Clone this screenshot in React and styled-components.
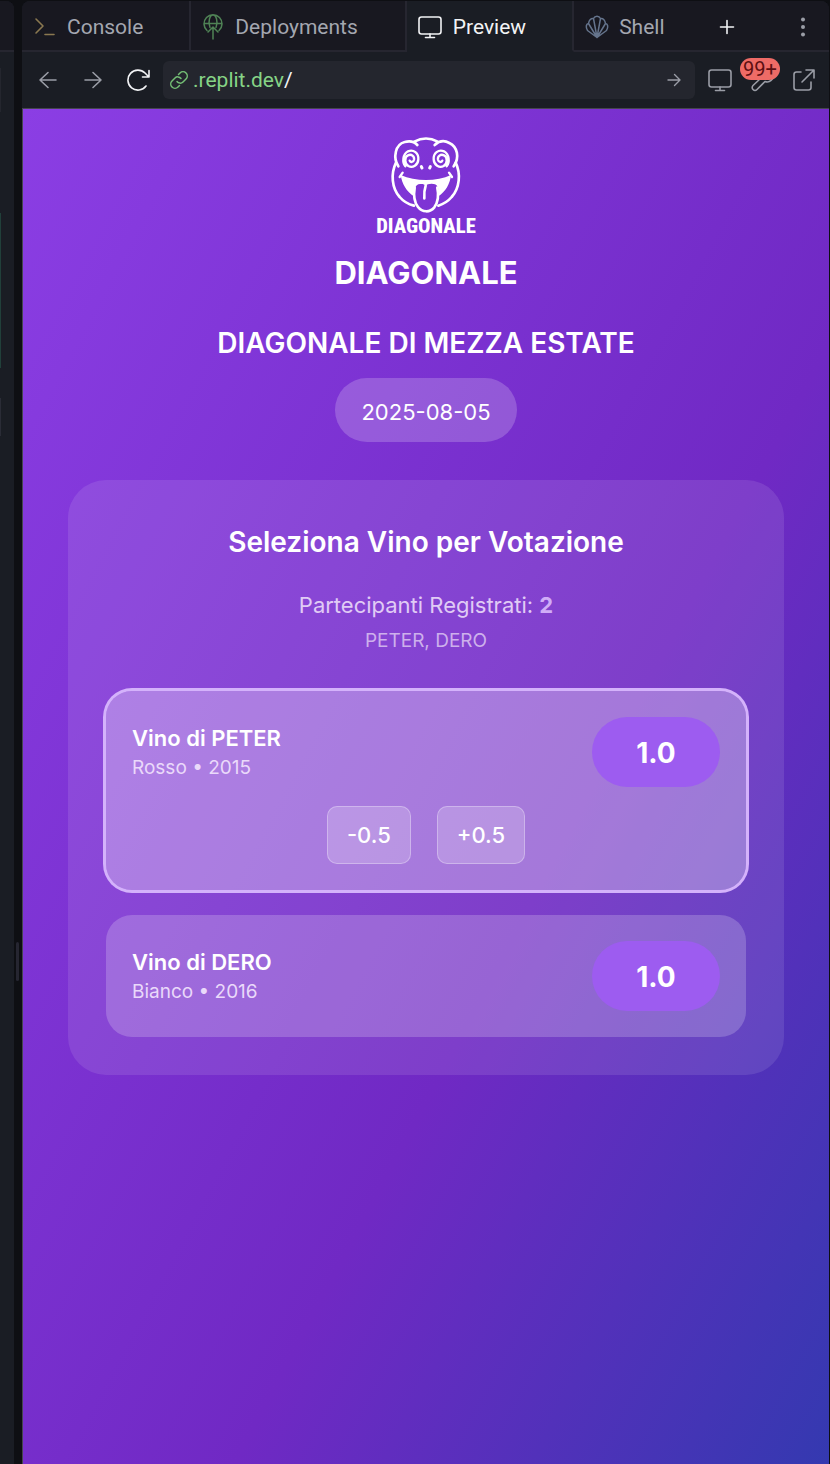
import React from "react";
import styled, { createGlobalStyle } from "styled-components";

const GlobalStyle = createGlobalStyle`
  *, *::before, *::after { box-sizing: border-box; }
  body { margin: 0; background: #0e0f13; }
  button, input { font: inherit; color: inherit; }
  h1, h2, h3, p { margin: 0; }
`;

const Workspace = styled.div`
  display: flex;
  min-height: 100vh;
  padding-top: 1px;
  background: #0e0f13;
  font-family: Roboto, "Liberation Sans", sans-serif;
`;

const SidePane = styled.aside`
  flex: 0 0 14px;
  background: #1a1d24;
  border-top-right-radius: 8px;
  overflow: hidden;
`;

const SideTab = styled.div`
  height: 51px;
  background: #181820;
  border-bottom: 2px solid #262630;
`;

const SideCard = styled.div`
  width: 1px;
  height: ${(p) => p.$height}px;
  margin-top: ${(p) => p.$gap}px;
  background: ${(p) => p.$color};
`;

const Divider = styled.div`
  flex: 0 0 8px;
  padding: 941px 3px 0 2px;
`;

const Grip = styled.div`
  height: 39px;
  border-radius: 2px;
  background: #262631;
`;

const Pane = styled.main`
  flex: 1;
  min-width: 0;
  display: flex;
  flex-direction: column;
  margin-right: 1px;
  border-radius: 8px 8px 0 0;
  overflow: hidden;
  background: #1a1d24;
`;

const TabBar = styled.nav`
  display: flex;
  height: 51px;
  background: #181820;
`;

const Tab = styled.button`
  display: flex;
  align-items: center;
  gap: 11px;
  padding: 2px ${(p) => p.$end}px 0 ${(p) => p.$start || 11}px;
  border: 0;
  border-right: 2px solid #262630;
  border-bottom: 2px solid ${(p) => (p.$active ? "#1a1d24" : "#262630")};
  background: ${(p) => (p.$active ? "#1a1d24" : "transparent")};
  color: ${(p) => (p.$active ? "#f2f3f5" : "#a4a7b0")};
  font-size: 21px;
  line-height: 28px;
  white-space: nowrap;
`;

const ShellTab = styled(Tab)`
  gap: 10px;
  border-right: 0;
`;

const TabTools = styled.div`
  flex: 1;
  display: flex;
  align-items: center;
  justify-content: space-between;
  padding: 2px 14px 0 10px;
  border-bottom: 2px solid #262630;
`;

const IconButton = styled.button`
  position: relative;
  display: flex;
  align-items: center;
  justify-content: center;
  flex: 0 0 auto;
  width: 24px;
  height: 24px;
  padding: 0;
  border: 0;
  background: none;
  color: ${(p) => (p.$bright ? "#f2f3f5" : "#9a9da6")};
`;

const Toolbar = styled.div`
  display: flex;
  align-items: center;
  height: 56px;
  padding: 0 13px 1px 14px;
`;

const NavButtons = styled.div`
  display: flex;
  gap: 21px;
  margin-right: 13px;
`;

const AddressBar = styled.form`
  flex: 1;
  min-width: 0;
  display: flex;
  align-items: center;
  height: 38px;
  padding: 0 9px 0 6px;
  border-radius: 6px;
  background: #24262e;
  font-size: 21px;
`;

const Host = styled.label`
  margin-left: 4px;
  color: #86d486;
`;

const PathInput = styled.input`
  flex: 1;
  min-width: 0;
  padding: 0;
  border: 0;
  outline: 0;
  background: none;
  color: #f2f3f5;
`;

const Actions = styled.div`
  display: flex;
  gap: 18px;
  margin-left: 13px;
`;

const Badge = styled.span`
  position: absolute;
  top: -10px;
  left: -10px;
  padding: 0 3px;
  border-radius: 11px;
  background: #ee6b66;
  color: #5e0f12;
  font-size: 20px;
  line-height: 22px;
`;

const Page = styled.section`
  flex: 1;
  padding: 27px 45px 48px;
  border-left: 1px solid #45454f;
  border-top: 1px solid #45454f;
  background: linear-gradient(118deg, #8b3ee4, #7029c4 61%, #3439b0);
  color: #fff;
  font-family: Inter, "Liberation Sans", sans-serif;
`;

const Header = styled.header`
  display: flex;
  flex-direction: column;
  align-items: center;
  text-align: center;
`;

const Brand = styled.h1`
  margin-top: 17px;
  font-size: 31px;
  line-height: 40px;
  font-weight: 700;
`;

const EventName = styled.h2`
  margin-top: 31px;
  font-size: 28px;
  line-height: 38px;
  font-weight: 600;
`;

const DatePill = styled.time`
  height: 64px;
  margin-top: 16px;
  padding: 2px 26px 0;
  border-radius: 32px;
  background: rgba(255, 255, 255, 0.2);
  font-size: 22px;
  line-height: 64px;
`;

const VoteCard = styled.section`
  margin-top: 38px;
  padding: 38px;
  border-radius: 38px;
  background: rgba(255, 255, 255, 0.1);
`;

const VoteTitle = styled.h3`
  font-size: 28px;
  line-height: 48px;
  font-weight: 600;
  text-align: center;
`;

const Participants = styled.p`
  margin-top: 22px;
  color: #e0cbf5;
  font-size: 22px;
  line-height: 35px;
  text-align: center;

  strong { color: #d0adf7; font-weight: 700; }
`;

const Names = styled.p`
  margin-top: 4px;
  color: #cdb0ec;
  font-size: 19px;
  line-height: 28px;
  text-align: center;
`;

const WineList = styled.div`
  display: flex;
  flex-direction: column;
  gap: 25px;
  margin-top: 36px;
`;

const Wine = styled.article`
  padding: 26px;
  border-radius: 26px;
  background: rgba(255, 255, 255, ${(p) => (p.$selected ? 0.3 : 0.2)});
  box-shadow: ${(p) => (p.$selected ? "0 0 0 3px #d4b2fb" : "none")};
`;

const WineTop = styled.div`
  display: flex;
  align-items: center;
  justify-content: space-between;
`;

const WineName = styled.h4`
  margin: 0;
  font-size: 22px;
  line-height: 32px;
  font-weight: 600;
`;

const WineInfo = styled.p`
  color: #ead9fa;
  font-size: 19px;
  line-height: 28px;
`;

const Score = styled.output`
  width: 128px;
  height: 70px;
  border-radius: 35px;
  background: #9d5cf0;
  font-size: 28px;
  line-height: 72px;
  font-weight: 700;
  text-align: center;
`;

const Steps = styled.div`
  display: flex;
  justify-content: center;
  gap: 26px;
  margin-top: 19px;
`;

const StepButton = styled.button`
  height: 58px;
  padding: 0 19px;
  border: 1px solid rgba(255, 255, 255, 0.3);
  border-radius: 10px;
  background: rgba(255, 255, 255, 0.2);
  font-size: 22px;
  font-weight: 500;
`;

const Icon = ({ w = 24, h = 24, sw = 1.6, color = "currentColor", children }) => (
  <svg width={w} height={h} viewBox={`0 0 ${w} ${h}`} fill="none" stroke={color}
    strokeWidth={sw} strokeLinecap="round" strokeLinejoin="round" aria-hidden="true">
    {children}
  </svg>
);

const PromptIcon = () => (
  <Icon w={22} color="#8a7850"><path d="M2 4l7 7-7 7M11 19.500h9" /></Icon>
);

const DeployIcon = () => (
  <Icon w={22} h={28} sw={1.5} color="#4f8355">
    <path d="M5 17.500a9 9 0 1 1 12 0M2 10.500h18M8 14.500c-2.500-6 0-12.500 3-12.500s5.500 6.500 3 12.500M11 26V14M6 19l5-5 5 5" />
  </Icon>
);

const MonitorIcon = () => (
  <Icon w={24}><rect x="1" y="2" width="22" height="17" rx="2.500" /><path d="M12 19v3.500M7.500 22.500h9" /></Icon>
);

const ShellIcon = () => (
  <Icon w={24} sw={1.5} color="#65748c">
    <path d="M12 22.500L2.500 15.500C.5 12 1 9 3.500 8.500 4 5 6 3 8.500 3.500c1.500-3 5.500-3 7 0C18 3 20 5 20.500 8.500c2.500.5 3 3.500 1 7zM12 22.500L3.500 8.500M12 22.500L8.500 3.500M12 22.500L15.500 3.500M12 22.500L20.500 8.500" />
  </Icon>
);

const FrogLogo = () => (
  <svg width="100" height="100" viewBox="30 33 300 300" overflow="visible" fill="none" stroke="#fff"
    strokeWidth="8" strokeLinecap="round" strokeLinejoin="round" role="img" aria-label="Diagonale logo">
    <path d="M97 124C80 98 88 58 116 51c14-4 28-2 38 9M206 60c13-12 30-14 44-6 24 11 32 44 13 70M145 50c22-12 48-12 70 0" />
    <path d="M90 113c-16 33-13 76 11 103 11 13 26 22 43 26M269 113c16 33 12 76-12 103-11 13-24 21-40 26" />
    <path strokeWidth="7" d="M118 124c-10-12-8-36 8-45 17-7 32 6 31 24-1 17-17 27-30 20-12-8-12-26-1-32 10-5 20 3 18 13-2 8-11 9-13 3" />
    <path strokeWidth="7" d="M242 124c10-12 8-36-8-45-17-7-32 6-31 24 1 17 17 27 30 20 12-8 12-26 1-32-10-5-20 3-18 13 2 8 11 9 13 3" />
    <path fill="#fff" stroke="none" d="M104 150c45 20 108 20 151 0-3 28-17 50-38 64 4-30-5-38-20-38-9 0-15 2-18 6-4-5-10-6-17-5-14 1-17 14-18 37-22-14-36-37-40-64z" />
    <path strokeWidth="7" d="M101 156l9-13M258 156l-9-13" />
    <path d="M146 188c-3 18-2 42 10 58 13 17 36 17 49 1 11-16 13-40 9-59M179 182c-4 12-5 25-4 38" />
    <path strokeWidth="9" d="M166 125l2 4M193 125l-2 4" />
    <text x="180" y="324" textAnchor="middle" fill="#fff" stroke="none" fontSize="62"
      fontWeight="800" fontFamily="'Roboto Condensed', 'Liberation Sans Narrow', sans-serif">DIAGONALE</text>
  </svg>
);

const wines = [
  { name: "Vino di PETER", info: "Rosso • 2015", score: "1.0", selected: true },
  { name: "Vino di DERO", info: "Bianco • 2016", score: "1.0", selected: false },
];

export default function App() {
  return (
    <>
      <GlobalStyle />
      <Workspace>
        <SidePane>
          <SideTab />
          <SideCard $gap={16} $height={44} $color="#24262e" />
          <SideCard $gap={101} $height={155} $color="#21403a" />
          <SideCard $gap={30} $height={38} $color="#2a2c36" />
        </SidePane>
        <Divider><Grip /></Divider>
        <Pane>
          <TabBar>
            <Tab $start={12} $end={46}><PromptIcon />Console</Tab>
            <Tab $end={47}><DeployIcon />Deployments</Tab>
            <Tab $end={46} $active><MonitorIcon />Preview</Tab>
            <ShellTab $end={40}><ShellIcon />Shell</ShellTab>
            <TabTools>
              <IconButton $bright aria-label="New tab">
                <Icon><path d="M12 5.500v13M5.500 12h13" /></Icon>
              </IconButton>
              <IconButton aria-label="More">
                <Icon><g fill="currentColor" stroke="none"><circle cx="12" cy="4.500" r="2" /><circle cx="12" cy="12" r="2" /><circle cx="12" cy="19.500" r="2" /></g></Icon>
              </IconButton>
            </TabTools>
          </TabBar>
          <Toolbar>
            <NavButtons>
              <IconButton aria-label="Back"><Icon><path d="M20 12H4M12 4.500L4 12l8 7.500" /></Icon></IconButton>
              <IconButton aria-label="Forward"><Icon><path d="M4 12h16M12 4.500l8 7.500-8 7.500" /></Icon></IconButton>
              <IconButton $bright aria-label="Reload">
                <Icon><path d="M20 18A10 10 0 1 1 19 5l4 4M23 2.500V9h-6.500" /></Icon>
              </IconButton>
            </NavButtons>
            <AddressBar>
              <Icon w={20} h={20} sw={1.5} color="#74bf75">
                <path d="M8 11.500a4 4 0 0 0 6 .5l3-3a4.200 4.200 0 0 0-6-6L9.500 4.500M12 8.500a4 4 0 0 0-6-.5l-3 3a4.200 4.200 0 0 0 6 6l1.500-1.500" />
              </Icon>
              <Host htmlFor="path">.replit.dev</Host>
              <PathInput id="path" defaultValue="/" />
              <IconButton type="button" aria-label="Go"><Icon sw={1.4}><path d="M6 12h12M12.500 6.500L18 12l-5.500 5.500" /></Icon></IconButton>
            </AddressBar>
            <Actions>
              <IconButton aria-label="Device"><MonitorIcon /></IconButton>
              <IconButton aria-label="Developer tools">
                <Icon><path d="M14 7a6 6 0 0 1 7-4l-3 4 2 2 3-2.500a6 6 0 0 1-8 7l-8 8a2.400 2.400 0 0 1-4-4l8-7.500" /></Icon>
                <Badge>99+</Badge>
              </IconButton>
              <IconButton aria-label="Open in new tab">
                <Icon><path d="M9 4H4.500A2.500 2.500 0 0 0 2 6.500v13A2.500 2.500 0 0 0 4.500 22h12a2.500 2.500 0 0 0 2.500-2.500V14M14 2h8v8M22 2L10 14" /></Icon>
              </IconButton>
            </Actions>
          </Toolbar>
          <Page>
            <Header>
              <FrogLogo />
              <Brand>DIAGONALE</Brand>
              <EventName>DIAGONALE DI MEZZA ESTATE</EventName>
              <DatePill dateTime="2025-08-05">2025-08-05</DatePill>
            </Header>
            <VoteCard>
              <VoteTitle>Seleziona Vino per Votazione</VoteTitle>
              <Participants>Partecipanti Registrati: <strong>2</strong></Participants>
              <Names>PETER, DERO</Names>
              <WineList>
                {wines.map((wine) => (
                  <Wine key={wine.name} $selected={wine.selected}>
                    <WineTop>
                      <div>
                        <WineName>{wine.name}</WineName>
                        <WineInfo>{wine.info}</WineInfo>
                      </div>
                      <Score>{wine.score}</Score>
                    </WineTop>
                    {wine.selected && (
                      <Steps>
                        <StepButton>-0.5</StepButton>
                        <StepButton>+0.5</StepButton>
                      </Steps>
                    )}
                  </Wine>
                ))}
              </WineList>
            </VoteCard>
          </Page>
        </Pane>
      </Workspace>
    </>
  );
}
